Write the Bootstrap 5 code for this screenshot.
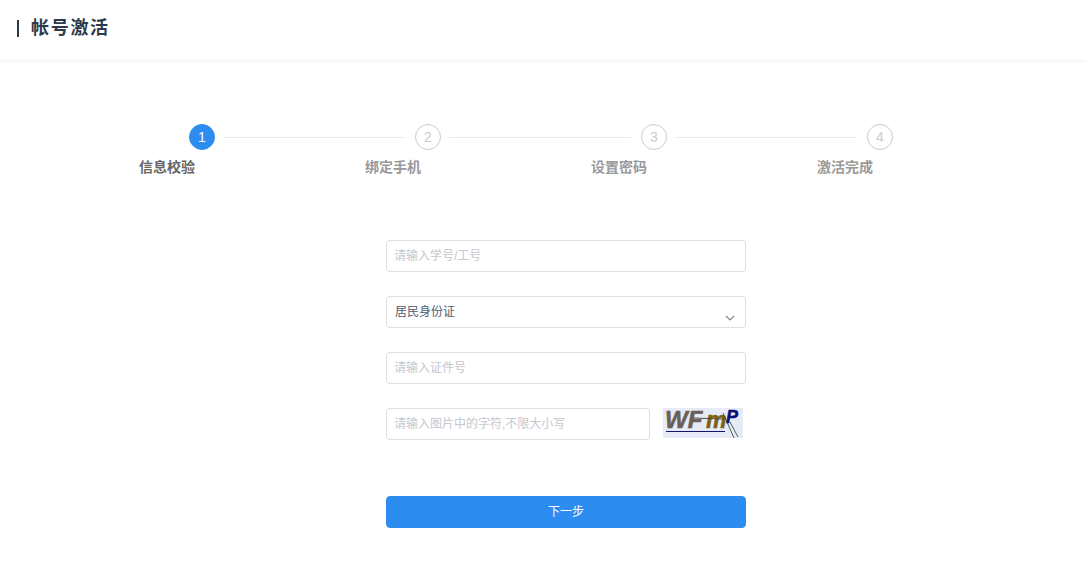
<!DOCTYPE html>
<html lang="zh-CN">
<head>
<meta charset="utf-8">
<title>帐号激活</title>
<link href="https://cdn.jsdelivr.net/npm/bootstrap@5.3.0/dist/css/bootstrap.min.css" rel="stylesheet">
<style>
html,body{height:100%;}
body{font-family:"Liberation Sans","Noto Sans CJK SC",sans-serif;font-size:12px;color:#515a6e;background:#fff;overflow:hidden;}
.topbar{height:60px;padding:0 0 4px 17px;box-shadow:0 1px 4px rgba(0,0,0,.07);}
.topbar-mark{width:2px;height:17px;background:#2d3a4b;margin-right:12px;}
.topbar-title{font-size:18px;font-weight:700;letter-spacing:1.7px;color:#2d3a4b;margin:0;line-height:1;}
.steps{padding:64px 0 0 189px;}
.step-box{width:226px;flex:none;}
.step-box.step-end{width:26px;}
.step-dot{width:26px;height:26px;flex:none;border:1px solid #ccc;color:#ccc;font-size:14px;line-height:1;background:#fff;}
.step-box.step-on .step-dot{background:#2d8cf0;border-color:#2d8cf0;color:#fff;}
.step-line{height:1px;background:#e8eaec;margin:0 10px 0 8px;}
.step-name{width:56px;margin:9px 0 0 -50px;font-size:14px;line-height:16px;font-weight:700;color:#999;white-space:nowrap;}
.step-box.step-on .step-name{color:#666;}
.form-wrap{width:360px;margin:65px 0 0 386px;}
.form-wrap .form-control,.form-wrap .form-select{height:32px;padding:0 7px;font-size:12px;color:#515a6e;border:1px solid #dcdee2;border-radius:4px;box-shadow:none;line-height:30px;}
.form-wrap .form-control::placeholder{color:#c5c8ce;opacity:1;}
.form-wrap .form-select{padding:0 8px 2px;background-image:url("data:image/svg+xml,%3Csvg xmlns='http://www.w3.org/2000/svg' width='10' height='6' viewBox='0 0 10 6'%3E%3Cpath d='M1 1l4 4 4-4' fill='none' stroke='%23808695' stroke-width='1.2'/%3E%3C/svg%3E");background-position:right 10px top 18px;background-size:10px 6px;}
.field-row{margin-bottom:24px;}
.code-input{width:264px;flex:none;}
.code-pic{width:80px;height:30px;margin-left:13px;flex:none;display:block;}
.go-btn{height:32px;margin-top:32px;padding:0;background:#2d8cf0;border:1px solid #2d8cf0;border-radius:4px;color:#fff;font-size:12px;}
.go-btn:hover{background:#2d8cf0;border-color:#2d8cf0;color:#fff;}
</style>
</head>
<body>
<header class="topbar d-flex align-items-center bg-white">
  <span class="topbar-mark"></span>
  <h1 class="topbar-title">帐号激活</h1>
</header>
<div class="steps d-flex">
  <div class="step-box step-on">
    <div class="d-flex align-items-center"><span class="step-dot rounded-circle d-flex align-items-center justify-content-center">1</span><span class="step-line flex-grow-1"></span></div>
    <div class="step-name">信息校验</div>
  </div>
  <div class="step-box">
    <div class="d-flex align-items-center"><span class="step-dot rounded-circle d-flex align-items-center justify-content-center">2</span><span class="step-line flex-grow-1"></span></div>
    <div class="step-name">绑定手机</div>
  </div>
  <div class="step-box">
    <div class="d-flex align-items-center"><span class="step-dot rounded-circle d-flex align-items-center justify-content-center">3</span><span class="step-line flex-grow-1"></span></div>
    <div class="step-name">设置密码</div>
  </div>
  <div class="step-box step-end">
    <div class="d-flex align-items-center"><span class="step-dot rounded-circle d-flex align-items-center justify-content-center">4</span></div>
    <div class="step-name">激活完成</div>
  </div>
</div>
<form class="form-wrap">
  <div class="field-row"><input class="form-control" type="text" placeholder="请输入学号/工号"></div>
  <div class="field-row"><select class="form-select"><option>居民身份证</option></select></div>
  <div class="field-row"><input class="form-control" type="text" placeholder="请输入证件号"></div>
  <div class="field-row d-flex align-items-start">
    <input class="form-control code-input" type="text" placeholder="请输入图片中的字符,不限大小写">
    <svg class="code-pic" viewBox="0 0 80 30" xmlns="http://www.w3.org/2000/svg">
      <rect width="80" height="30" fill="#e7ebf7"/>
      <text x="2" y="20" font-family="Liberation Sans" font-weight="700" font-style="italic" font-size="24" fill="#6b5f59" stroke="#6b5f59" stroke-width=".6">WF</text>
      <text x="43" y="20" font-family="Liberation Sans" font-weight="700" font-style="italic" font-size="23" fill="#7a6212" stroke="#7a6212" stroke-width=".5">m</text>
      <text x="63" y="15" font-family="Liberation Sans" font-weight="700" font-style="italic" font-size="18" fill="#0c0f78" stroke="#0c0f78" stroke-width=".5">P</text>
      <path d="M30 10l30 1" stroke="#4d4a3c" stroke-width="1" fill="none"/>
      <path d="M3 23.500h59" stroke="#12126e" stroke-width="1" fill="none"/>
      <path d="M60 5l11 25M67 14l8 15" stroke="#23402c" stroke-width=".8" fill="none"/>
    </svg>
  </div>
  <button type="button" class="btn go-btn w-100">下一步</button>
</form>
<script src="https://cdn.jsdelivr.net/npm/bootstrap@5.3.0/dist/js/bootstrap.bundle.min.js"></script>
</body>
</html>
